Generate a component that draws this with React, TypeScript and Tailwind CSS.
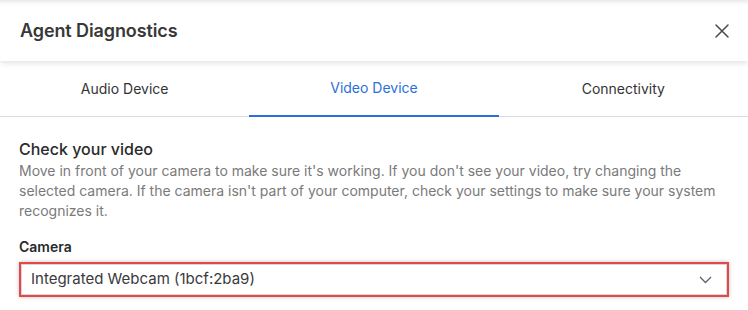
import React from "react";

export default function App() {
  return (
    <div className="w-[748px] h-[310px] bg-white overflow-hidden" style={{ fontFamily: "Inter, 'Noto Sans', sans-serif" }}>
      <div className="h-[61px] flex items-center justify-between pl-[20px] pr-[18px] bg-white relative z-10 shadow-[inset_0_5px_4px_-3px_rgba(0,0,0,0.10),0_2px_6px_rgba(0,0,0,0.12)]">
        <div className="text-[18px] font-semibold text-[#383838] tracking-[-0.1px]">Agent Diagnostics</div>
        <svg width="16" height="16" viewBox="0 0 16 16" className="text-[#4a4a4a]">
          <path d="M2 2 L14 14 M14 2 L2 14" stroke="currentColor" strokeWidth="1.5" fill="none" strokeLinecap="round" />
        </svg>
      </div>
      <div className="grid grid-cols-3 border-b border-[#dcdcdc] h-[56px]">
        <div className="flex items-center justify-center pb-px text-[14px] text-[#333]">Audio Device</div>
        <div className="flex items-center justify-center pb-px text-[14px] text-[#2b6fdc] border-b-2 border-[#2b6fdc] -mb-px">Video Device</div>
        <div className="flex items-center justify-center pb-px text-[14px] text-[#333]">Connectivity</div>
      </div>
      <div className="px-[19px] pt-[20px]">
        <div className="text-[16px] leading-[24px] font-medium text-[#2a2a2a]">Check your video</div>
        <p className="text-[14px] leading-[20px] text-[#7a7a7a]">
          Move in front of your camera to make sure it's working. If you don't see your video, try changing the
          <br />
          selected camera. If the camera isn't part of your computer, check your settings to make sure your system
          <br />
          recognizes it.
        </p>
        <div className="mt-[16px] text-[14px] leading-[20px] font-semibold text-[#2a2a2a]">Camera</div>
        <div className="mt-[5px] w-[710px] h-[35px] border-2 border-[#e8474a] shadow-[0_0_4px_rgba(0,0,0,0.25)]">
          <div className="h-full border border-[#d6d6d6] flex items-center justify-between pl-[9px] pr-[14px]">
            <span className="text-[15px] text-[#3a3a3a]">Integrated Webcam (1bcf:2ba9)</span>
            <svg width="13" height="8" viewBox="0 0 13 8" className="text-[#5a6070]">
              <path d="M1 1 L6.5 6.5 L12 1" stroke="currentColor" strokeWidth="1.3" fill="none" />
            </svg>
          </div>
        </div>
      </div>
    </div>
  );
}
